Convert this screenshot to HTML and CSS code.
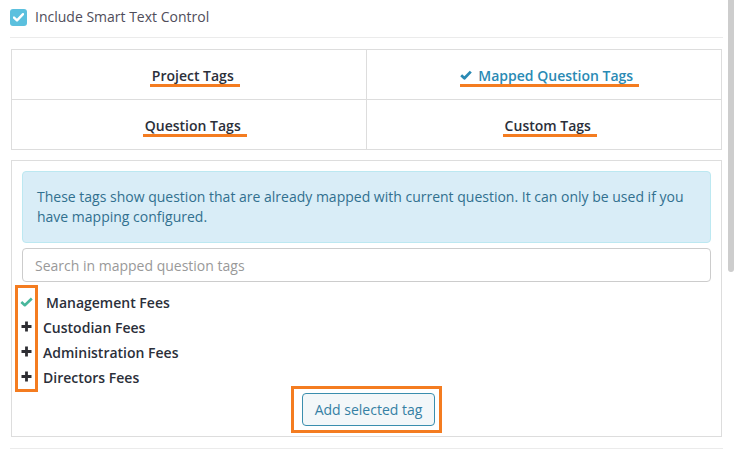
FILE: index.html
```html
<!DOCTYPE html>
<html lang="en">
<head>
<meta charset="utf-8">
<title>Smart Text Control</title>
<link rel="stylesheet" href="styles.css">
</head>
<body>
<div class="page">
  <label class="smart">
    <span class="cbox"><svg width="11" height="9" viewBox="0 0 11 9"><path d="M1 4.6 L4 7.4 L10 1.2" fill="none" stroke="#fff" stroke-width="2.4" stroke-linecap="round" stroke-linejoin="round"/></svg></span>
    <span class="smart-text">Include Smart Text Control</span>
  </label>
  <div class="rule"></div>

  <div class="tabs">
    <div class="tab tab-r1"><span class="tab-label">Project Tags</span></div>
    <div class="tab tab-r1 tab-right"><span class="tab-label active"><svg class="tab-check" width="12" height="10" viewBox="0 0 12 10"><path d="M1.2 5.2 L4.4 8.2 L10.8 1.6" fill="none" stroke="currentColor" stroke-width="2.8" stroke-linejoin="round"/></svg>Mapped Question Tags</span></div>
    <div class="tab"><span class="tab-label">Question Tags</span></div>
    <div class="tab tab-right"><span class="tab-label">Custom Tags</span></div>
  </div>

  <div class="panel">
    <div class="alert">These tags show question that are already mapped with current question. It can only be used if you have mapping configured.</div>
    <input class="search" type="text" placeholder="Search in mapped question tags">
    <div class="taglist">
      <div class="marks">
        <div class="mark"><svg width="13" height="10" viewBox="0 0 13 10"><path d="M1.3 5 L4.8 8.2 L11.8 1.5" fill="none" stroke="#48b79c" stroke-width="2.6" stroke-linejoin="round"/></svg></div>
        <div class="mark"><svg width="11" height="11" viewBox="0 0 11 11"><path d="M5.5 0.5 V10.5 M0.5 5.5 H10.5" stroke="#2e2e33" stroke-width="2.8"/></svg></div>
        <div class="mark"><svg width="11" height="11" viewBox="0 0 11 11"><path d="M5.5 0.5 V10.5 M0.5 5.5 H10.5" stroke="#2e2e33" stroke-width="2.8"/></svg></div>
        <div class="mark"><svg width="11" height="11" viewBox="0 0 11 11"><path d="M5.5 0.5 V10.5 M0.5 5.5 H10.5" stroke="#2e2e33" stroke-width="2.8"/></svg></div>
      </div>
      <div class="labels">
        <div class="label label-on">Management Fees</div>
        <div class="label">Custodian Fees</div>
        <div class="label">Administration Fees</div>
        <div class="label">Directors Fees</div>
      </div>
    </div>
    <div class="btn-row">
      <div class="btn-frame"><button class="btn" type="button">Add selected tag</button></div>
    </div>
  </div>
  <div class="rule rule-bottom"></div>
</div>
<div class="scrollthumb"></div>
</body>
</html>
```
FILE: styles.css
```css
html, body {
  margin: 0;
  padding: 0;
  background: #fff;
}
body {
  font-family: "Open Sans", "Liberation Sans", sans-serif;
  font-size: 14px;
  color: #333;
  width: 734px;
  height: 463px;
  overflow: hidden;
  position: relative;
}
.page {
  padding: 7px 11px 0 10px;
}
.smart {
  display: flex;
  align-items: center;
  gap: 8px;
  height: 20px;
}
.cbox {
  width: 17px;
  height: 17px;
  border-radius: 3px;
  background: #5bc0de;
  display: flex;
  align-items: center;
  justify-content: center;
}
.smart-text {
  color: #4f4d5a;
  line-height: 20px;
}
.rule {
  margin-top: 10px;
  border-top: 1px solid #ebebeb;
}
.tabs {
  margin: 11px 1px 0;
  border: 1px solid #ddd;
  display: grid;
  grid-template-columns: 1fr 1fr;
}
.tab {
  box-sizing: border-box;
  height: 50px;
  display: flex;
  align-items: center;
  justify-content: center;
  padding: 4px 0 0 12px;
  border-right: 1px solid #ddd;
}
.tab-right {
  border-right: none;
}
.tab-r1 {
  border-bottom: 1px solid #ddd;
}
.tab + .tab:not(.tab-r1) {
  height: 49px;
}
.tab-label {
  display: inline-flex;
  align-items: center;
  font-weight: 600;
  line-height: 17px;
  padding: 0 6px 0 2px;
  border-bottom: 3px solid #f47c20;
  color: #2b2f3a;
}
.tab-label.active {
  color: #2a8ab4;
  padding-left: 0;
}
.tab-check {
  margin-right: 6px;
}
.panel {
  margin: 10px 1px 0;
  border: 1px solid #ddd;
  padding: 10px 10px 3px;
}
.alert {
  background: #d9edf7;
  border: 1px solid #bce8f1;
  border-radius: 4px;
  color: #31708f;
  padding: 15px 14px;
  line-height: 20px;
}
.search {
  display: block;
  box-sizing: border-box;
  width: 100%;
  height: 34px;
  margin-top: 5px;
  padding: 6px 12px;
  border: 1px solid #ccc;
  border-radius: 4px;
  font-family: inherit;
  font-size: 14px;
  color: #555;
}
.search::placeholder {
  color: #999;
}
.taglist {
  display: flex;
  margin: 3px 0 0 -7px;
}
.marks {
  border: 3px solid #f47c20;
  width: 17px;
  padding-top: 1px;
}
.mark {
  height: 25px;
  display: flex;
  align-items: center;
  justify-content: center;
}
.labels {
  margin-left: 5px;
  padding-top: 5px;
}
.label {
  height: 25px;
  line-height: 25px;
  font-weight: 600;
  color: #2b2f3a;
}
.label-on {
  padding-left: 3px;
}
.btn-row {
  display: flex;
  justify-content: center;
  margin-top: -6px;
}
.btn-frame {
  border: 3px solid #f47c20;
  padding: 4px 4px 4px 8px;
}
.btn {
  display: block;
  height: 33px;
  padding: 6px 12px;
  font-family: inherit;
  font-size: 14px;
  line-height: 19px;
  color: #3580a4;
  background: #f3f7f9;
  border: 1px solid #3a8eae;
  border-radius: 4px;
}
.rule-bottom {
  margin-top: 11px;
}
.scrollthumb {
  position: absolute;
  top: 0;
  right: 0;
  width: 6px;
  height: 272px;
  background: #cdcdcd;
  border-radius: 0 0 3px 3px;
}
```
